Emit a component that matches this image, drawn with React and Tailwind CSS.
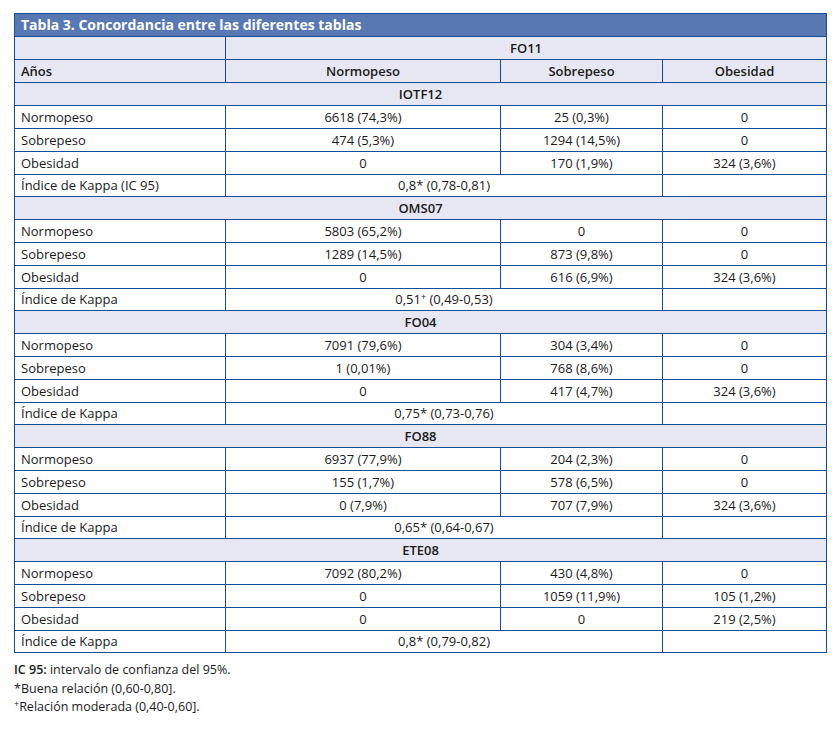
const plus = <sup className="text-[9px] -top-[4px]">+</sup>;

const sections = [
  {
    name: 'IOTF12',
    rows: [
      ['Normopeso', '6618 (74,3%)', '25 (0,3%)', '0'],
      ['Sobrepeso', '474 (5,3%)', '1294 (14,5%)', '0'],
      ['Obesidad', '0', '170 (1,9%)', '324 (3,6%)'],
    ],
    kappaLabel: 'Índice de Kappa (IC 95)',
    kappa: '0,8* (0,78-0,81)',
  },
  {
    name: 'OMS07',
    rows: [
      ['Normopeso', '5803 (65,2%)', '0', '0'],
      ['Sobrepeso', '1289 (14,5%)', '873 (9,8%)', '0'],
      ['Obesidad', '0', '616 (6,9%)', '324 (3,6%)'],
    ],
    kappaLabel: 'Índice de Kappa',
    kappa: <>0,51{plus} (0,49-0,53)</>,
  },
  {
    name: 'FO04',
    rows: [
      ['Normopeso', '7091 (79,6%)', '304 (3,4%)', '0'],
      ['Sobrepeso', '1 (0,01%)', '768 (8,6%)', '0'],
      ['Obesidad', '0', '417 (4,7%)', '324 (3,6%)'],
    ],
    kappaLabel: 'Índice de Kappa',
    kappa: '0,75* (0,73-0,76)',
  },
  {
    name: 'FO88',
    rows: [
      ['Normopeso', '6937 (77,9%)', '204 (2,3%)', '0'],
      ['Sobrepeso', '155 (1,7%)', '578 (6,5%)', '0'],
      ['Obesidad', '0 (7,9%)', '707 (7,9%)', '324 (3,6%)'],
    ],
    kappaLabel: 'Índice de Kappa',
    kappa: '0,65* (0,64-0,67)',
  },
  {
    name: 'ETE08',
    rows: [
      ['Normopeso', '7092 (80,2%)', '430 (4,8%)', '0'],
      ['Sobrepeso', '0', '1059 (11,9%)', '105 (1,2%)'],
      ['Obesidad', '0', '0', '219 (2,5%)'],
    ],
    kappaLabel: 'Índice de Kappa',
    kappa: '0,8* (0,79-0,82)',
  },
];

const cell = 'border border-[#114f98] p-0 px-[6px] whitespace-nowrap';

export default function App() {
  return (
    <div
      className="bg-white w-[839px] h-[736px] pt-[13px] pl-[14px] text-[#1a1a1a]"
      style={{ fontFamily: '"Open Sans", "Noto Sans", sans-serif' }}
    >
      <table className="border-collapse table-fixed w-[812px] text-[13px] leading-none">
        <colgroup>
          <col className="w-[211px]" />
          <col className="w-[275px]" />
          <col className="w-[162px]" />
          <col className="w-[164px]" />
        </colgroup>
        <tbody>
          <tr className="h-[23px]">
            <td colSpan={4} className={`${cell} bg-[#5878b4] text-white font-bold text-[14px]`}>
              Tabla 3. Concordancia entre las diferentes tablas
            </td>
          </tr>
          <tr className="h-[23px] bg-[#e7e7f3] font-semibold">
            <td className={cell}></td>
            <td colSpan={3} className={`${cell} text-center`}>FO11</td>
          </tr>
          <tr className="h-[23px] bg-[#e7e7f3] font-semibold">
            <td className={cell}>Años</td>
            <td className={`${cell} text-center`}>Normopeso</td>
            <td className={`${cell} text-center`}>Sobrepeso</td>
            <td className={`${cell} text-center`}>Obesidad</td>
          </tr>
          {sections.map(s => (
            <Section key={s.name} s={s} />
          ))}
        </tbody>
      </table>
      <div className="mt-[8px] text-[12.5px] leading-[18.5px]">
        <div><span className="font-semibold">IC 95:</span> intervalo de confianza del 95%.</div>
        <div>*Buena relación (0,60-0,80].</div>
        <div>{plus}Relación moderada (0,40-0,60].</div>
      </div>
    </div>
  );
}

function Section({ s }) {
  return (
    <>
      <tr className="h-[23px] bg-[#e7e7f3] font-semibold">
        <td colSpan={4} className={`${cell} text-center`}>{s.name}</td>
      </tr>
      {s.rows.map((r, i) => (
        <tr key={i} className="h-[23px]">
          <td className={cell}>{r[0]}</td>
          <td className={`${cell} text-center`}>{r[1]}</td>
          <td className={`${cell} text-center`}>{r[2]}</td>
          <td className={`${cell} text-center`}>{r[3]}</td>
        </tr>
      ))}
      <tr className="h-[22px]">
        <td className={cell}>{s.kappaLabel}</td>
        <td colSpan={2} className={`${cell} text-center`}>{s.kappa}</td>
        <td className={cell}></td>
      </tr>
    </>
  );
}
